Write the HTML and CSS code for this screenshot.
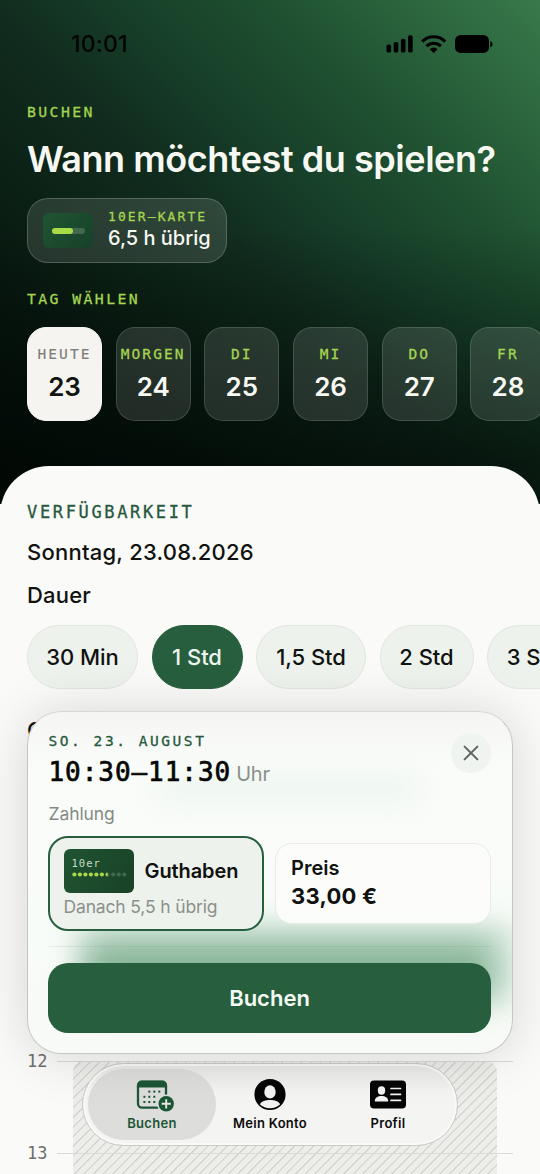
FILE: index.html
```html
<!DOCTYPE html>
<html lang="de">
<head>
<meta charset="utf-8">
<title>Buchen</title>
<link rel="stylesheet" href="styles.css">
</head>
<body>
<div class="screen">
  <header class="hero">
    <div class="status">
      <span class="clock">10:01</span>
      <svg class="status-icons" width="108" height="20" viewBox="0 0 108 20">
        <rect x="0.5" y="10.5" width="4.6" height="8" rx="1.6"/>
        <rect x="7.7" y="8" width="4.6" height="10.5" rx="1.6"/>
        <rect x="14.9" y="4.8" width="4.6" height="13.7" rx="1.6"/>
        <rect x="22.1" y="1.2" width="4.6" height="17.3" rx="1.6"/>
        <g fill="none" stroke="#000" stroke-width="3.1">
          <path d="M36.2 7.6 a16 16 0 0 1 23 0"/>
          <path d="M40.5 12.2 a10.2 10.2 0 0 1 14.4 0"/>
        </g>
        <path d="M47.7 19 L43.8 15.2 a5.6 5.6 0 0 1 7.8 0 Z"/>
        <rect x="69" y="1" width="34" height="18" rx="5.6"/>
        <path d="M104.3 7 a3.4 3.4 0 0 1 0 6.4 Z"/>
      </svg>
    </div>
    <p class="eyebrow">BUCHEN</p>
    <h1 class="title">Wann möchtest du spielen?</h1>
    <div class="pass">
      <div class="pass-card"><div class="pass-track"><div class="pass-fill"></div></div></div>
      <div>
        <div class="pass-label">10ER–KARTE</div>
        <div class="pass-value">6,5 h übrig</div>
      </div>
    </div>
    <p class="eyebrow eyebrow-day">TAG WÄHLEN</p>
    <div class="days">
      <div class="day day-active"><span class="dow">HEUTE</span><span class="num">23</span></div>
      <div class="day"><span class="dow">MORGEN</span><span class="num">24</span></div>
      <div class="day"><span class="dow">DI</span><span class="num">25</span></div>
      <div class="day"><span class="dow">MI</span><span class="num">26</span></div>
      <div class="day"><span class="dow">DO</span><span class="num">27</span></div>
      <div class="day"><span class="dow">FR</span><span class="num">28</span></div>
    </div>
  </header>

  <main class="sheet">
    <p class="section">VERFÜGBARKEIT</p>
    <p class="line line-date">Sonntag, 23.08.2026</p>
    <p class="line line-dur">Dauer</p>
    <div class="chips">
      <span class="chip">30 Min</span>
      <span class="chip chip-active">1 Std</span>
      <span class="chip chip-w">1,5 Std</span>
      <span class="chip chip-m">2 Std</span>
      <span class="chip chip-m">3 Std</span>
    </div>
    <p class="line line-court">C</p>
    <div class="timeline">
      <div class="blocked"></div>
      <div class="hour"><span>12</span><i></i></div>
      <div class="hour"><span>13</span><i></i></div>
    </div>
  </main>

  <nav class="tabs">
    <div class="tab tab-active">
      <svg width="40" height="34" viewBox="0 0 40 34">
        <rect x="6" y="3" width="28" height="25.6" rx="4" fill="none" stroke="#1c5636" stroke-width="2.3"/>
        <path d="M4.9 8.6 V6 a4.4 4.4 0 0 1 4.4-4.4 h21.4 A4.4 4.4 0 0 1 35.1 6 v2.6 Z" fill="#1c5636"/>
        <g fill="#1c5636">
          <rect x="16.3" y="11.6" width="2" height="2"/><rect x="21.3" y="11.6" width="2" height="2"/><rect x="26.3" y="11.6" width="2" height="2"/>
          <rect x="11.4" y="16.8" width="2" height="2"/><rect x="16.3" y="16.8" width="2" height="2"/><rect x="21.3" y="16.8" width="2" height="2"/>
          <rect x="11.4" y="22" width="2" height="2"/><rect x="16.3" y="22" width="2" height="2"/><rect x="21.3" y="22" width="2" height="2"/>
        </g>
        <circle cx="34.2" cy="24.8" r="9.3" fill="#dddddb"/>
        <circle cx="34.2" cy="24.8" r="7.7" fill="#1c5636"/>
        <path d="M34.2 20.2v9.2M29.6 24.8h9.2" stroke="#e6e9e5" stroke-width="1.9"/>
      </svg>
      <span>Buchen</span>
    </div>
    <div class="tab">
      <svg width="40" height="34" viewBox="0 0 40 34">
        <circle cx="20" cy="15.5" r="15.6" fill="#060606"/>
        <ellipse cx="20" cy="12.9" rx="5.7" ry="6.6" fill="#f3f3f2"/>
        <path d="M9.8 25.3 C11.6 21.8 15.5 20.9 20 20.9 C24.5 20.9 28.4 21.8 30.2 25.3 C27.4 28.2 23.9 29.3 20 29.3 C16.1 29.3 12.6 28.2 9.8 25.3Z" fill="#f3f3f2"/>
      </svg>
      <span>Mein Konto</span>
    </div>
    <div class="tab">
      <svg width="40" height="34" viewBox="0 0 40 34">
        <rect x="2" y="1.5" width="36" height="28" rx="4" fill="#060606"/>
        <ellipse cx="13.5" cy="11.5" rx="3.7" ry="4.2" fill="#f3f3f2"/>
        <path d="M6.8 22.5 c0-4 3-5.4 6.7-5.4 s6.7 1.4 6.7 5.4 Z" fill="#f3f3f2"/>
        <path d="M23 9.5h9.5M23 15.4h9.5M23 21.4h9.5" stroke="#f3f3f2" stroke-width="1.7" stroke-linecap="round"/>
      </svg>
      <span>Profil</span>
    </div>
  </nav>

  <section class="modal">
    <div class="glow-clip"><div class="glow glow-soft"></div><div class="glow glow-haze"></div><div class="glow glow-deep"></div></div>
    <div class="modal-head">
      <div>
        <p class="modal-date">SO. 23. AUGUST</p>
        <p class="modal-time"><b>10:30–11:30</b><span>Uhr</span></p>
      </div>
      <div class="close">
        <svg width="16" height="16" viewBox="0 0 16 16"><path d="M1.6 1.6 L14.4 14.4 M14.4 1.6 L1.6 14.4" stroke="#5f625f" stroke-width="2" stroke-linecap="round"/></svg>
      </div>
    </div>
    <p class="modal-pay">Zahlung</p>
    <div class="options">
      <div class="credit">
        <div class="credit-row">
          <div class="ticket">
            <span>10er</span>
            <svg width="56" height="5" viewBox="0 0 56 5">
              <g fill="#a9d84a"><circle cx="2.4" cy="2.5" r="2.1"/><circle cx="7.9" cy="2.5" r="2.1"/><circle cx="13.4" cy="2.5" r="2.1"/><circle cx="18.9" cy="2.5" r="2.1"/><circle cx="24.4" cy="2.5" r="2.1"/><circle cx="29.9" cy="2.5" r="2.1"/></g>
              <g fill="#41694f"><circle cx="35.4" cy="2.5" r="2.1"/><circle cx="41.3" cy="2.5" r="2.1"/><circle cx="46.8" cy="2.5" r="2.1"/><circle cx="52.3" cy="2.5" r="2.1"/></g>
              <path d="M35.6 .4 a2.1 2.1 0 0 0 0 4.2Z" fill="#a9d84a"/>
            </svg>
          </div>
          <span class="credit-name">Guthaben</span>
        </div>
        <div class="credit-rest">Danach 5,5 h übrig</div>
      </div>
      <div class="price">
        <div class="price-label">Preis</div>
        <div class="price-value">33,00 €</div>
      </div>
    </div>
    <div class="rule"></div>
    <div class="book">Buchen</div>
  </section>
</div>
</body>
</html>
```

FILE: styles.css
```css
* { box-sizing: border-box; margin: 0; padding: 0; }
body { background: #fafaf8; font-family: Inter, "Liberation Sans", sans-serif; color: #101210; }
.screen { position: relative; width: 540px; height: 1174px; overflow: hidden; white-space: nowrap; }

/* Header */
.hero {
  height: 504px;
  padding: 0 27px;
  background:
    linear-gradient(to bottom, rgba(0,6,3,0) 45%, rgba(0,6,3,.62) 92%),
    linear-gradient(225deg, #38794a 0%, #1f5131 26%, #173f29 40%, #112c1e 53%, #0c2216 66%, #07170f 80%, #040c08 100%);
}
.status { height: 88px; display: flex; align-items: center; justify-content: space-between; padding: 0 19.5px 0 44px; }
.clock { font-size: 23px; font-weight: 500; letter-spacing: 0.2px; color: #010503; }
.status-icons { display: block; }
.eyebrow, .pass-label, .dow, .section, .modal-date { font-family: "DejaVu Sans Mono", monospace; -webkit-text-stroke: .3px currentColor; }
.eyebrow { margin-top: 13px; font-size: 14.8px; line-height: 21px; letter-spacing: 2.4px; color: #a4d451; }
.title { margin-top: 13px; font-size: 36px; line-height: 48px; font-weight: 600; letter-spacing: -0.45px; color: #f8f8f3; }
.pass {
  margin-top: 15px; width: 200px; height: 65px; padding: 0 15px;
  display: flex; align-items: center; gap: 15px;
  border: 1px solid rgba(255,255,255,.2); border-radius: 21px; background: rgba(255,255,255,.12);
}
.pass-card { width: 50px; height: 35px; border-radius: 6px; background: linear-gradient(135deg, #1f5532, #174129); display: flex; align-items: center; padding-left: 9px; }
.pass-track { width: 33px; height: 6px; border-radius: 3px; background: #42694f; }
.pass-fill { width: 21px; height: 6px; border-radius: 3px; background: #a8dc48; }
.pass-label { font-size: 13px; line-height: 16px; letter-spacing: 2.1px; color: #a4d451; }
.pass-value { font-size: 20px; line-height: 27px; font-weight: 500; color: #f8f8f3; }
.eyebrow-day { margin-top: 25px; }
.days { margin-top: 17.5px; display: flex; gap: 13.7px; }
.day {
  flex: none; width: 75px; height: 94px; padding-top: 16px;
  display: flex; flex-direction: column; align-items: center;
  border: 1px solid rgba(255,255,255,.14); border-radius: 19px; background: rgba(255,255,255,.12); color: #f8f8f3;
}
.day-active { background: #f6f4f0; border-color: #f6f4f0; color: #111411; }
.dow { font-size: 14.5px; line-height: 20px; letter-spacing: 2.1px; color: #a4d451; }
.day-active .dow { color: #7c7e79; -webkit-text-stroke-width: .15px; }
.num { margin-top: 6px; font-size: 26px; line-height: 34px; font-weight: 600; }

/* Availability sheet */
.sheet { margin-top: -38px; height: 708px; padding: 35px 27px 0; border-radius: 49px 49px 0 0; background: #fafaf8; }
.section { font-size: 17px; line-height: 22px; letter-spacing: 2.65px; color: #27583d; }
.line { margin-top: 15px; font-size: 22px; line-height: 28px; font-weight: 500; }
.line-date { letter-spacing: .24px; }
.line-dur { letter-spacing: .2px; }
.chips { margin-top: 16px; display: flex; gap: 13.5px; }
.chip {
  flex: none; width: 111px; height: 64px; border-radius: 32px;
  display: flex; align-items: center; justify-content: center;
  font-size: 22px; font-weight: 500; letter-spacing: -0.05px;
  background: #edf2ed; border: 1px solid #e2e6e1;
}
.chip-active { width: 91px; background: #275f3e; border-color: #275f3e; color: #eef5ee; }
.chip-w { width: 110px; }
.chip-m { width: 94px; }
.line-court { margin-top: 27px; }
.timeline { position: relative; margin-top: 306px; }
.hour { height: 91.5px; display: flex; align-items: flex-start; gap: 9px; }
.hour span { width: 21px; font: 17px/22px "DejaVu Sans Mono", monospace; color: #6d6f6c; }
.hour i { position: relative; flex: none; width: 456px; height: 1px; margin-top: 11px; background: #d9dad6; }
.blocked {
  position: absolute; left: 46px; top: 11px; width: 424px; height: 240px; border-radius: 11px;
  background: repeating-linear-gradient(135deg, #ededea 0 5.2px, #d0d1cd 5.7px 6.3px, #ededea 6.8px);
}

/* Tab bar */
.tabs {
  position: absolute; left: 82px; top: 1063px; width: 376px; height: 83px; padding: 5px;
  display: flex; border-radius: 42px; border: 1px solid #c9c9c7;
  background: linear-gradient(#e9e9e8, #f4f4f3 35%, #f4f4f3); box-shadow: inset 0 0 0 2px #fafaf9;
}
.tab { width: 118px; padding-top: 10px; display: flex; flex-direction: column; align-items: center; font-size: 13px; font-weight: 600; letter-spacing: .3px; line-height: 16px; color: #0b0b0b; }
.tab-active { width: 128px; flex: none; border-radius: 36px; background: #dddddb; color: #1c5636; margin-right: -5px; }
.tab svg { display: block; margin-bottom: 2px; overflow: visible; }

/* Booking card */
.modal {
  position: absolute; left: 27px; top: 711px; width: 486px; height: 343px; padding: 20px 20.5px 0;
  border: 1px solid #c4c6c3; border-top-color: #d5d7d4; border-radius: 34px;
  background: linear-gradient(#f5f6f4, #fafcf9 16%, #f8fcf8 60%, #f7faf6);
  box-shadow: 0 2px 52px rgba(0,0,0,.15);
}
.glow-clip { position: absolute; inset: 0; overflow: hidden; border-radius: 33px; }
.glow { position: absolute; }
.glow-soft { left: 130px; top: 64px; width: 260px; height: 24px; background: #ebf5ee; filter: blur(14px); }
.glow-haze { left: 52px; top: 212px; width: 434px; height: 78px; background: #cfe4d6; filter: blur(14px); }
.glow-deep { left: 58px; top: 230px; width: 406px; height: 56px; background: #86b397; filter: blur(16px); }
.modal-head { position: relative; display: flex; justify-content: space-between; }
.modal-date { font-size: 14.5px; line-height: 18px; letter-spacing: 2.55px; color: #27583d; }
.modal-time { margin-top: 5px; line-height: 34px; display: flex; align-items: baseline; gap: 5px; }
.modal-time b { font: 26px/34px "DejaVu Sans Mono", monospace; letter-spacing: .95px; -webkit-text-stroke: .7px #050605; color: #050605; }
.modal-time span { font-size: 20px; color: #8b908c; letter-spacing: -0.2px; }
.close { width: 40px; height: 40px; margin-right: .5px; margin-top: .5px; border-radius: 50%; background: #f0f4f1; display: flex; align-items: center; justify-content: center; }
.modal-pay { position: relative; margin-top: 11px; font-size: 17.5px; line-height: 24px; color: #858a86; letter-spacing: -0.1px; }
.options { position: relative; margin-top: 10px; margin-left: -.5px; display: flex; align-items: center; gap: 11px; }
.credit { flex: none; width: 216px; height: 95px; padding: 11px 13.5px; border: 2.5px solid #275f3e; border-radius: 20px; background: #eef2ed; }
.credit-row { display: flex; align-items: center; gap: 11px; }
.ticket { width: 70px; height: 44px; padding: 8px 0 0 8px; border-radius: 6px; background: linear-gradient(120deg, #1f5432, #194126); }
.ticket span { display: block; font: 10.5px/12px "DejaVu Sans Mono", monospace; letter-spacing: 1px; color: #c5dccb; }
.ticket svg { display: block; margin-top: 3px; }
.credit-name { font-size: 20px; font-weight: 600; letter-spacing: -0.1px; }
.credit-rest { margin-top: 1px; font-size: 17.5px; line-height: 26px; color: #8b908c; letter-spacing: -0.15px; }
.price { width: 216px; height: 81px; padding: 10px 15px; border: 1px solid #e8ebe7; border-radius: 17px; background: rgba(252,253,251,.95); }
.price-label { font-size: 20px; line-height: 28px; font-weight: 600; }
.price-value { font-size: 22px; line-height: 28px; font-weight: 700; letter-spacing: .25px; }
.rule { position: relative; margin-top: 15px; height: 1px; background: rgba(80,120,95,.1); }
.book {
  position: relative; margin: 16px .5px 0 -.5px; height: 70px; border-radius: 20px; background: #275f3e; color: #f4faf4;
  display: flex; align-items: center; justify-content: center; font-size: 22px; font-weight: 600;
}
```
